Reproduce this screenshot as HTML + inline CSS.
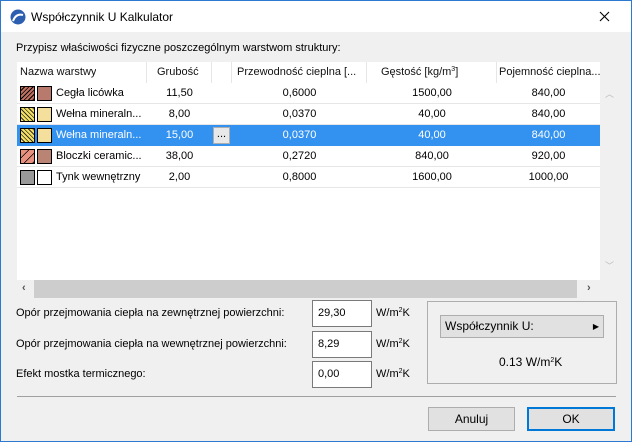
<!DOCTYPE html>
<html><head><meta charset="utf-8"><style>
*{box-sizing:border-box;margin:0;padding:0}
body{width:632px;height:442px;overflow:hidden;background:#f0f0f0;font-family:"Liberation Sans",sans-serif;font-size:11px;color:#000;position:relative}
sup{font-size:7px;line-height:0;vertical-align:4px}
.win{position:absolute;left:0;top:0;width:632px;height:442px;border:1px solid #2b79d0;background:#f0f0f0}
.title{position:absolute;left:0;top:0;width:630px;height:31px;background:#fff}
.a{position:absolute;white-space:nowrap}
.table{position:absolute;left:16px;top:61px;width:583px;height:218px;background:#fff}
.hdr{position:absolute;top:0;height:22px;line-height:21px;color:#111;white-space:nowrap;overflow:hidden}
.row{position:absolute;left:0;width:583px;height:21px;border-bottom:1px solid #e6e6e6;line-height:20px;white-space:nowrap}
.row.sel{background:#3392f0;color:#fff;border-bottom-color:#3392f0}
.c{position:absolute;top:0;text-align:center}
.sw{position:absolute;top:3px;width:15px;height:15px;border:1px solid #000}
.inp{position:absolute;left:311px;width:60px;height:27px;background:#fff;border:1px solid #7a7a7a;padding-left:5px;line-height:25px;font-size:11px}
.btn{position:absolute;height:24px;background:#e1e1e1;border:1px solid #adadad;text-align:center;line-height:22px;font-size:12px}
</style></head><body><div class="win">
<div class="title">
<svg class="a" style="left:9px;top:8px" width="16" height="16" viewBox="0 0 16 16"><circle cx="8" cy="8" r="7.5" fill="#2d5fb0"/><path d="M3 12 Q6 4 13 6" stroke="#fff" stroke-width="2" fill="none"/></svg>
<div class="a" style="left:30px;top:9px;font-size:12px">Współczynnik U Kalkulator</div>
<svg class="a" style="left:598px;top:10px" width="11" height="11"><path d="M1 1L10 10M10 1L1 10" stroke="#000" stroke-width="1.1"/></svg>
</div>
<div class="a" style="left:15px;top:41px">Przypisz właściwości fizyczne poszczególnym warstwom struktury:</div>
<div class="table">
<div class="hdr" style="left:3px">Nazwa warstwy</div>
<div class="hdr" style="left:129px;width:1px;height:21px;background:#e6e6e6"></div>
<div class="hdr" style="left:140px">Grubość</div>
<div class="hdr" style="left:194px;width:1px;height:21px;background:#e6e6e6"></div>
<div class="hdr" style="left:214px;width:1px;height:21px;background:#e6e6e6"></div>
<div class="hdr" style="left:220px;width:128px">Przewodność cieplna [...</div>
<div class="hdr" style="left:349px;width:1px;height:21px;background:#e6e6e6"></div>
<div class="hdr" style="left:364px">Gęstość [kg/m<sup>3</sup>]</div>
<div class="hdr" style="left:479px;width:1px;height:21px;background:#e6e6e6"></div>
<div class="hdr" style="left:482px;width:101px">Pojemność cieplna...</div>

<div class="row" style="top:21px"><div class="sw" style="left:3px;background:repeating-linear-gradient(135deg,#c07060 0 2px,#000 2px 3px)"></div><div class="sw" style="left:20px;background:#b97a6e"></div><div class="c" style="left:39px">Cegła licówka</div><div class="c" style="left:130px;width:65px">11,50</div><div class="c" style="left:215px;width:135px">0,6000</div><div class="c" style="left:350px;width:130px">1500,00</div><div class="c" style="left:480px;width:103px">840,00</div></div>
<div class="row" style="top:42px"><div class="sw" style="left:3px;background:repeating-linear-gradient(45deg,#f5e060 0 2px,#333 2px 3px),#f5e060"></div><div class="sw" style="left:20px;background:#f5df9c"></div><div class="c" style="left:39px">Wełna mineraln...</div><div class="c" style="left:130px;width:65px">8,00</div><div class="c" style="left:215px;width:135px">0,0370</div><div class="c" style="left:350px;width:130px">40,00</div><div class="c" style="left:480px;width:103px">840,00</div></div>
<div class="row sel" style="top:63px"><div class="sw" style="left:3px;background:repeating-linear-gradient(45deg,#f5e060 0 2px,#333 2px 3px)"></div><div class="sw" style="left:20px;background:#f5df9c"></div><div class="c" style="left:39px">Wełna mineraln...</div><div class="c" style="left:130px;width:65px">15,00</div><div style="position:absolute;left:196px;top:2px;width:17px;height:17px;background:#e8e8e8;border:1px solid #adadad;color:#000;line-height:12px;text-align:center">...</div><div class="c" style="left:215px;width:135px">0,0370</div><div class="c" style="left:350px;width:130px">40,00</div><div class="c" style="left:480px;width:103px">840,00</div></div>
<div class="row" style="top:84px"><div class="sw" style="left:3px;background:repeating-linear-gradient(135deg,#e89080 0 5px,#000 5px 6px)"></div><div class="sw" style="left:20px;background:#b98474"></div><div class="c" style="left:39px">Bloczki ceramic...</div><div class="c" style="left:130px;width:65px">38,00</div><div class="c" style="left:215px;width:135px">0,2720</div><div class="c" style="left:350px;width:130px">840,00</div><div class="c" style="left:480px;width:103px">920,00</div></div>
<div class="row" style="top:105px"><div class="sw" style="left:3px;background:radial-gradient(#333 40%,#bbb 45%) 0 0/2px 2px"></div><div class="sw" style="left:20px;background:#fff"></div><div class="c" style="left:39px">Tynk wewnętrzny</div><div class="c" style="left:130px;width:65px">2,00</div><div class="c" style="left:215px;width:135px">0,8000</div><div class="c" style="left:350px;width:130px">1600,00</div><div class="c" style="left:480px;width:103px">1000,00</div></div>
</div>
<div class="a" style="left:599px;top:61px;width:17px;height:218px;background:#f0f0f0"></div>
<div class="a" style="left:604px;top:86px;color:#bbb;font-size:9px">︿</div>
<div class="a" style="left:604px;top:258px;color:#bbb;font-size:9px">﹀</div>
<div class="a" style="left:16px;top:279px;width:583px;height:18px;background:#f0f0f0"></div>
<div class="a" style="left:33px;top:279px;width:543px;height:18px;background:#cdcdcd"></div>
<div class="a" style="left:21px;top:281px;font-size:11px;font-weight:bold;color:#555">‹</div>
<div class="a" style="left:586px;top:281px;font-size:11px;font-weight:bold;color:#555">›</div>

<div class="a" style="left:15px;top:306px">Opór przejmowania ciepła na zewnętrznej powierzchni:</div>
<div class="a" style="left:15px;top:337px">Opór przejmowania ciepła na wewnętrznej powierzchni:</div>
<div class="a" style="left:15px;top:367px">Efekt mostka termicznego:</div>
<div class="inp" style="top:299px">29,30</div>
<div class="inp" style="top:330px">8,29</div>
<div class="inp" style="top:360px">0,00</div>
<div class="a" style="left:375px;top:306px">W/m<sup>2</sup>K</div>
<div class="a" style="left:375px;top:337px">W/m<sup>2</sup>K</div>
<div class="a" style="left:375px;top:367px">W/m<sup>2</sup>K</div>
<div class="a" style="left:426px;top:300px;width:190px;height:83px;border:1px solid #adadad"></div>
<div class="a" style="left:439px;top:314px;width:164px;height:23px;background:#e1e1e1;border:1px solid #adadad;padding-left:4px;line-height:21px;font-size:12px">Współczynnik U:<span style="position:absolute;right:4px;font-size:8px">▶</span></div>
<div class="a" style="left:498px;top:354px;font-size:12px">0.13 W/m<sup>2</sup>K</div>
<div class="a" style="left:16px;top:395px;width:599px;height:1px;background:#a0a0a0"></div>
<div class="btn" style="left:427px;top:406px;width:87px">Anuluj</div>
<div class="btn" style="left:526px;top:406px;width:88px;border:2px solid #0078d7;line-height:20px">OK</div>
</div></body></html>
